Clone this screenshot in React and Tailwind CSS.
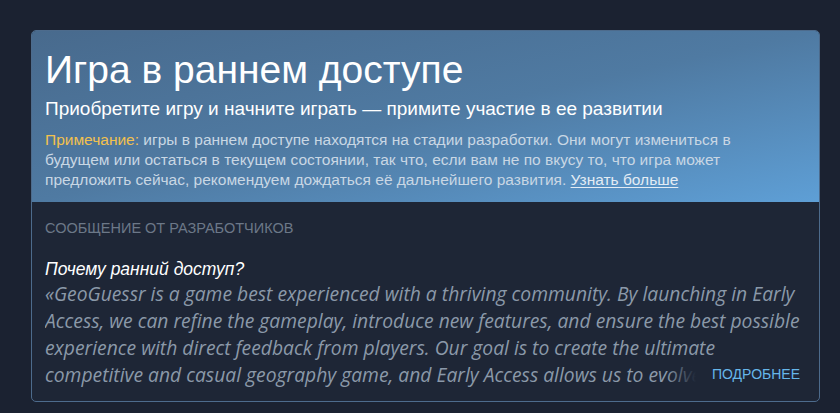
import React from 'react';

const EarlyAccessNotice = () => {
  return (
    <div className="min-h-[413px] w-full bg-[#1b2231] pt-[30px] pl-[31px] pr-[20px] pb-[12px] font-['Liberation_Sans',Arial,sans-serif]">
      <div className="w-[789px] overflow-hidden rounded-[5px] border border-[#4d6b8c] bg-[#1e2636]">
        {/* header */}
        <div className="bg-linear-to-br from-[#486a8d] via-[#4f7aa2] to-[#5e9fd6] pl-[13px] pr-[20px] pt-[17px] pb-[12px]">
          <h1 className="text-[39px] leading-[44px] text-white">Игра в раннем доступе</h1>
          <p className="mt-[6px] text-[19px] leading-[22px] text-white">
            Приобретите игру и начните играть — примите участие в ее развитии
          </p>
          <p className="mt-[10px] text-[15.5px] leading-[20px] text-[#c9d7e4]">
            <span className="text-[#f2c14e]">Примечание:</span> игры в раннем доступе находятся на стадии
            разработки. Они могут измениться в будущем или остаться в текущем состоянии, так что, если вам не по
            вкусу то, что игра может предложить сейчас, рекомендуем дождаться её дальнейшего развития.{' '}
            <a href="#" className="text-[#e3ecf4] underline underline-offset-2">
              Узнать больше
            </a>
          </p>
        </div>

        {/* developer message */}
        <div className="pl-[13px] pr-[8px] pt-[18px] pb-[13px]">
          <div className="text-[14.5px] leading-[16px] uppercase text-[#6c7888]">Сообщение от разработчиков</div>
          <div className="mt-[22px] text-[17.5px] leading-[22px] italic text-white">Почему ранний доступ?</div>
          <div className="relative h-[108px] overflow-hidden">
            <p className="font-['Open_Sans',sans-serif] text-[19.3px] leading-[27px] italic text-[#8b99a9]">
              «GeoGuessr is a game best experienced with a thriving community. By launching in Early Access, we
              can refine the gameplay, introduce new features, and ensure the best possible experience with direct
              feedback from players. Our goal is to create the ultimate competitive and casual geography game, and
              Early Access allows us to evolve the game together with our players.»
            </p>
            {/* fade the last line out under the "more" link */}
            <div className="absolute right-0 bottom-0 flex h-[27px] items-center">
              <div className="h-full w-[30px] bg-linear-to-r from-transparent to-[#1e2636]" />
              <a href="#" className="flex h-full items-center bg-[#1e2636] pl-[16px] pr-[11px] text-[14px] uppercase text-[#66b6ea]">
                Подробнее
              </a>
            </div>
          </div>
        </div>
      </div>
    </div>
  );
};

export default function App() {
  return <EarlyAccessNotice />;
}
